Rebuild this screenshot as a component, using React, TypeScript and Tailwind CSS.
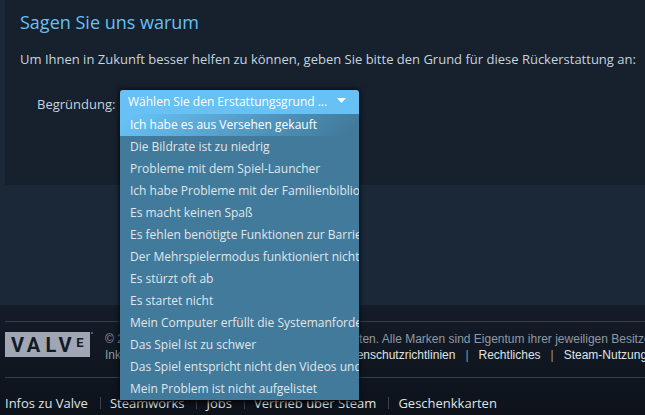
import { useState } from 'react'

const reasons = [
  'Ich habe es aus Versehen gekauft',
  'Die Bildrate ist zu niedrig',
  'Probleme mit dem Spiel-Launcher',
  'Ich habe Probleme mit der Familienbibliothek',
  'Es macht keinen Spaß',
  'Es fehlen benötigte Funktionen zur Barrierefreiheit',
  'Der Mehrspielermodus funktioniert nicht',
  'Es stürzt oft ab',
  'Es startet nicht',
  'Mein Computer erfüllt die Systemanforderungen nicht',
  'Das Spiel ist zu schwer',
  'Das Spiel entspricht nicht den Videos und Screenshots',
  'Mein Problem ist nicht aufgelistet',
]

const legalLinks = ['Datenschutzrichtlinien', 'Rechtliches', 'Steam-Nutzungsvertrag']
const footerLinks = ['Infos zu Valve', 'Steamworks', 'Jobs', 'Vertrieb über Steam', 'Geschenkkarten']

function ValveLogo() {
  return (
    <svg width="88" height="26" viewBox="0 0 88 26" className="shrink-0" role="img" aria-label="Valve">
      <rect y="1" width="85" height="25" fill="#a1a6b4" />
      <rect x="86" y="1" width="2" height="2" fill="#555b66" />
      <g fill="#121a25" fontFamily="Roboto, sans-serif" fontWeight="700" fontSize="20" textAnchor="middle">
        <text x="12.500" y="21">V</text>
        <text x="28.500" y="21">A</text>
        <text x="46" y="21">L</text>
        <text x="60" y="21">V</text>
        <text x="75" y="16" fontSize="13">E</text>
      </g>
    </svg>
  )
}

function ReasonSelect() {
  const [selected, setSelected] = useState('')
  const [open, setOpen] = useState(true)

  const choose = (reason: string) => {
    setSelected(reason)
    setOpen(false)
  }

  return (
    <div className="relative w-[239px] text-white shadow-[0_0_5px_#000]">
      <select
        id="reason"
        value={selected}
        onChange={e => choose(e.target.value)}
        onMouseDown={e => {
          e.preventDefault()
          setOpen(!open)
        }}
        className="relative z-20 block h-6 w-full appearance-none rounded-t-[3px] bg-[#67c1f5] pr-6 pl-2 text-[12px] font-medium outline-none"
      >
        <option value="">Wählen Sie den Erstattungsgrund ...</option>
        {reasons.map(reason => (
          <option key={reason} value={reason}>{reason}</option>
        ))}
      </select>
      <svg width="9" height="5" viewBox="0 0 9 5" className="pointer-events-none absolute top-2 right-[13px] z-20" aria-hidden="true">
        <path d="M0 0h9L4.500 5z" fill="#fff" />
      </svg>

      {open && (
        <ul className="absolute top-6 left-0 z-10 w-full overflow-hidden bg-[#417a9b] shadow-[0_2px_5px_#000]">
          {reasons.map((reason, i) => (
            <li key={reason}>
              <button
                type="button"
                onClick={() => choose(reason)}
                className={`block h-[22px] w-full overflow-hidden pl-[10px] text-left text-[12px] leading-[22px] whitespace-nowrap ${
                  i === 0 ? 'bg-linear-135 from-[#67c1f5] from-5% to-[#417a9b] to-95% text-white' : 'text-[#e0e6ea]'
                }`}
              >
                {reason}
              </button>
            </li>
          ))}
        </ul>
      )}
    </div>
  )
}

export default function App() {
  return (
    <div className="min-h-screen overflow-hidden bg-[#1b2838] pl-[5px] font-['Open_Sans',sans-serif]">

      {/* Refund reason */}
      <main className="pb-[120px]">
        <section className="h-[185px] bg-[#17202d] px-[15px] pt-[10px]">
          <h2 className="text-[18px] leading-6 text-[#66c0f4]">Sagen Sie uns warum</h2>
          <p className="mt-[15px] text-[13px] leading-5 whitespace-nowrap text-[#c6d4df]">
            Um Ihnen in Zukunft besser helfen zu können, geben Sie bitte den Grund für diese Rückerstattung an:
          </p>
          <div className="mt-[21px] flex pl-[17px]">
            <label htmlFor="reason" className="w-[83px] pt-1 text-[13px] leading-5 text-[#c6d4df]">Begründung:</label>
            <ReasonSelect />
          </div>
        </section>
      </main>

      {/* Footer */}
      <footer className="-ml-[5px] bg-linear-to-b from-[#141c28] to-[#0d121b] pt-4 pl-[5px]">
        <div className="flex h-[57px] gap-3 border-y border-[#363d47] pt-[9px] font-['Liberation_Sans',Arial,sans-serif] text-[12px] leading-4 whitespace-nowrap text-[#8f98a0]">
          <ValveLogo />
          <div>
            <p>© 2024 Valve Corporation. Alle Rechte vorbehalten. Alle Marken sind Eigentum ihrer jeweiligen Besitzer</p>
            <p className="flex">
              <span className="w-[233px]">Inkl. MwSt. (falls zutreffend).</span>
              {legalLinks.map((link, i) => (
                <span key={link}>
                  {i > 0 && <span className="px-[10px]">|</span>}
                  <a href="#" className="text-[#dfe3e6]">{link}</a>
                </span>
              ))}
            </p>
          </div>
        </div>

        <nav className="flex h-[37px] items-center pt-3 text-[13px] leading-5 whitespace-nowrap text-[#dfe3e6]">
          {footerLinks.map((link, i) => (
            <span key={link} className="flex items-center">
              {i > 0 && <span className="mr-[9px] ml-3 h-3 w-px bg-[#3a424d]" />}
              <a href="#">{link}</a>
            </span>
          ))}
        </nav>
      </footer>
    </div>
  )
}
